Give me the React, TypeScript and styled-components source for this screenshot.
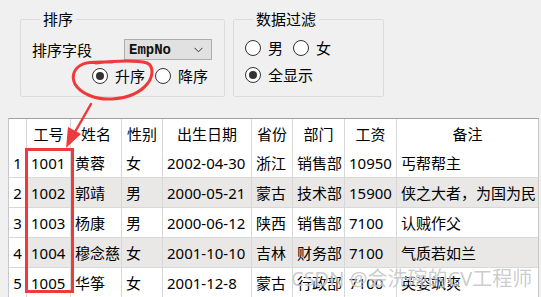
import { Fragment } from "react";
import styled, { createGlobalStyle } from "styled-components";

const GlobalStyle = createGlobalStyle`
  html, body {
    margin: 0;
    padding: 0;
    background: #f0f0f0;
    overflow: hidden;
  }
  body {
    font-family: "Noto Sans", "Noto Sans CJK SC", sans-serif;
    color: #000;
  }
`;

const Page = styled.div`
  position: relative;
  width: 541px;
  height: 297px;
  overflow: hidden;
`;

const TopPanel = styled.div`
  display: flex;
  gap: 8px;
  padding: 11px 0 0 20px;
  height: 86px;
`;

const GroupBox = styled.fieldset<{ $width: number }>`
  box-sizing: border-box;
  width: ${(p) => p.$width}px;
  height: 86px;
  margin: 0;
  padding: 12px 11px 0 11px;
  border: 1px solid #dcdcdc;
  border-radius: 2px;
  display: flex;
  flex-direction: column;
`;

const GroupTitle = styled.legend`
  margin-left: 8px;
  padding: 0 3px;
  font-size: 15px;
  line-height: 16px;
  font-family: "Noto Sans CJK SC", sans-serif;
`;

const FieldRow = styled.div`
  display: flex;
  align-items: center;
  height: 21px;
`;

const FieldLabel = styled.span`
  width: 92px;
  font-size: 15px;
  line-height: 21px;
  font-family: "Noto Sans CJK SC", sans-serif;
`;

const Combo = styled.div`
  box-sizing: border-box;
  width: 88px;
  height: 21px;
  border: 1px solid #adadad;
  background: #e1e1e1;
  display: flex;
  align-items: center;
  justify-content: space-between;
  padding: 0 8px 0 4px;
  font-family: "Liberation Mono", monospace;
  font-size: 14px;
  font-weight: 600;
  color: #111;
`;

const RadioRow = styled.div<{ $indent: number; $top: number }>`
  display: flex;
  align-items: center;
  height: 16px;
  margin-top: ${(p) => p.$top}px;
  padding-left: ${(p) => p.$indent}px;
  gap: 10px;
`;

const RadioItem = styled.label`
  display: flex;
  align-items: center;
  gap: 7px;
  font-size: 15px;
  font-family: "Noto Sans CJK SC", sans-serif;
  line-height: 16px;
`;

const Circle = styled.span<{ $checked?: boolean }>`
  box-sizing: border-box;
  width: 16px;
  height: 16px;
  border-radius: 50%;
  border: 1px solid #333;
  background: #fff;
  display: flex;
  align-items: center;
  justify-content: center;
  &::after {
    content: "";
    width: 8px;
    height: 8px;
    border-radius: 50%;
    background: ${(p) => (p.$checked ? "#333" : "transparent")};
  }
`;

const TableFrame = styled.div`
  margin: 21px 0 0 8px;
  width: 531px;
  box-sizing: border-box;
  border-top: 1px solid #a0a0a0;
  border-left: 1px solid #c8c8c8;
  border-right: 1px solid #c8c8c8;
  background: #fff;
`;

const Grid = styled.div`
  display: grid;
  grid-template-columns: 18px 44px 51px 41px 89px 41px 52px 52px 141px;
`;

const HeadCell = styled.div`
  box-sizing: border-box;
  height: 29px;
  border-right: 1px solid #d8d8d8;
  background: #fff;
  display: flex;
  align-items: center;
  justify-content: center;
  font-size: 15px;
  font-family: "Noto Sans CJK SC", sans-serif;
  &:nth-child(9) {
    border-right: none;
  }
`;

const Cell = styled.div<{ $alt?: boolean; $rowHead?: boolean; $last?: boolean }>`
  box-sizing: border-box;
  height: 30px;
  border-right: ${(p) => (p.$last ? "none" : "1px solid #d8d8d8")};
  border-bottom: 1px solid #d8d8d8;
  background: ${(p) => (p.$alt && !p.$rowHead ? "#e9e8e6" : "#fff")};
  display: flex;
  align-items: center;
  justify-content: ${(p) => (p.$rowHead ? "center" : "flex-start")};
  padding-left: ${(p) => (p.$rowHead ? 0 : 4)}px;
  font-size: 15px;
  font-family: "Noto Sans", "Noto Sans CJK SC", sans-serif;
  white-space: nowrap;
  overflow: hidden;
`;

const Overlay = styled.svg`
  position: absolute;
  left: 0;
  top: 0;
  pointer-events: none;
`;

const Watermark = styled.div`
  position: absolute;
  left: 291px;
  top: 263px;
  font-size: 20px;
  font-family: "Noto Sans", "Noto Sans CJK SC", sans-serif;
  color: rgba(140, 140, 140, 0.45);
  text-shadow: 0 0 1px rgba(255, 255, 255, 0.9);
  white-space: nowrap;
  pointer-events: none;
`;

const headers = ["", "工号", "姓名", "性别", "出生日期", "省份", "部门", "工资", "备注"];

const rows = [
  ["1001", "黄蓉", "女", "2002-04-30", "浙江", "销售部", "10950", "丐帮帮主"],
  ["1002", "郭靖", "男", "2000-05-21", "蒙古", "技术部", "15900", "侠之大者，为国为民"],
  ["1003", "杨康", "男", "2000-06-12", "陕西", "销售部", "7100", "认贼作父"],
  ["1004", "穆念慈", "女", "2001-10-10", "吉林", "财务部", "7100", "气质若如兰"],
  ["1005", "华筝", "女", "2001-12-8", "蒙古", "行政部", "7100", "英姿飒爽"],
];

const Chevron = () => (
  <svg width="9" height="6" viewBox="0 0 9 6">
    <path d="M0.5 0.8 L4.5 4.8 L8.5 0.8" fill="none" stroke="#333" strokeWidth="1" />
  </svg>
);

const App = () => {
  return (
    <Page>
      <GlobalStyle />
      <TopPanel>
        <GroupBox $width={205}>
          <GroupTitle>排序</GroupTitle>
          <FieldRow>
            <FieldLabel>排序字段</FieldLabel>
            <Combo>
              <span>EmpNo</span>
              <Chevron />
            </Combo>
          </FieldRow>
          <RadioRow $indent={60} $top={8}>
            <RadioItem>
              <Circle $checked />
              升序
            </RadioItem>
            <RadioItem>
              <Circle />
              降序
            </RadioItem>
          </RadioRow>
        </GroupBox>
        <GroupBox $width={151}>
          <GroupTitle>数据过滤</GroupTitle>
          <RadioRow $indent={0} $top={1}>
            <RadioItem>
              <Circle />
              男
            </RadioItem>
            <RadioItem>
              <Circle />
              女
            </RadioItem>
          </RadioRow>
          <RadioRow $indent={0} $top={11}>
            <RadioItem>
              <Circle $checked />
              全显示
            </RadioItem>
          </RadioRow>
        </GroupBox>
      </TopPanel>

      <TableFrame>
        <Grid>
          {headers.map((h, i) => (
            <HeadCell key={i}>{h}</HeadCell>
          ))}
          {rows.map((r, ri) => (
            <Fragment key={ri}>
              <Cell $rowHead>{ri + 1}</Cell>
              {r.map((v, ci) => (
                <Cell key={ci} $alt={ri % 2 === 1} $last={ci === r.length - 1}>
                  {v}
                </Cell>
              ))}
            </Fragment>
          ))}
        </Grid>
      </TableFrame>

      <Overlay width="541" height="297" viewBox="0 0 541 297">
        <path
          d="M96 63 C115 61 135 60 147 63 C154 66 153 76 148 83 C141 92 128 98 112 99 C95 100 80 93 75 84 C71 76 74 68 83 64 C90 61 100 62 112 62"
          fill="none"
          stroke="#ee3a3a"
          strokeWidth="3"
          strokeLinecap="round"
        />
        <path d="M91 104 L75 132" stroke="#ee3a3a" strokeWidth="2.5" strokeLinecap="round" />
        <polygon points="66,148 68,127 81,134" fill="#ee3a3a" />
        <rect x="26.5" y="149.5" width="46" height="142" fill="none" stroke="#ee3a3a" strokeWidth="3" />
      </Overlay>
      <Watermark>CSDN @会洗碗的CV工程师</Watermark>
    </Page>
  );
};

export default App;
